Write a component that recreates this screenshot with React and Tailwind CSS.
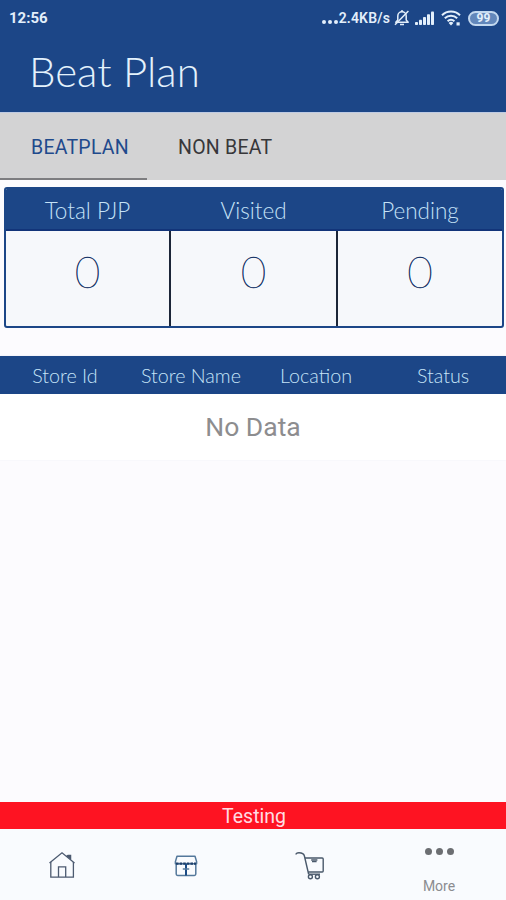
import React, { useState } from "react";

const TABS = [
  { id: "beat", label: "BEATPLAN", className: "w-[147px] pl-[31px]" },
  { id: "non", label: "NON BEAT", className: "w-[155px] pl-[31px]" },
];

const SUMMARY = [
  { label: "Total PJP", value: 0 },
  { label: "Visited", value: 0 },
  { label: "Pending", value: 0 },
];

const COLUMNS = ["Store Id", "Store Name", "Location", "Status"];

// -----------------------------------------
// STATUS BAR ICONS
// -----------------------------------------
function MutedBell() {
  return (
    <svg width="16" height="18" viewBox="0 0 16 18" fill="none" stroke="currentColor" strokeWidth="1.5">
      <path d="M1.8 13.2h12.4l-2-2.2V7a4.2 4.2 0 0 0-8.4 0v4z" strokeLinejoin="round" />
      <path d="M6 15.6h4M8 1v2" />
      <path d="M1 15.8 14.4 2" />
    </svg>
  );
}

function Signal() {
  return (
    <svg width="20" height="14" viewBox="0 0 20 14" fill="currentColor">
      <rect x="0" y="11" width="3" height="3" rx="0.8" />
      <rect x="4" y="8.8" width="3" height="5.2" rx="0.8" />
      <rect x="8" y="6" width="3" height="8" rx="0.8" />
      <rect x="12" y="3.3" width="3" height="10.7" rx="0.8" />
      <rect x="16" y="0.5" width="3" height="13.5" rx="0.8" />
    </svg>
  );
}

function Wifi() {
  return (
    <svg width="21" height="16" viewBox="0 0 21 16" fill="none" stroke="currentColor" strokeWidth="2">
      <path d="M1 5.2a13 13 0 0 1 18 0" />
      <path d="M3.8 8.3a9 9 0 0 1 12.4 0" />
      <path d="M6.6 11.2a5 5 0 0 1 6.8 0" />
      <path d="M10 15.4 7.6 12.9a3.4 3.4 0 0 1 4.8 0z" fill="currentColor" stroke="none" />
      <path d="M15.5 12.3h3.2v3.2h-3.2z" fill="currentColor" stroke="none" />
    </svg>
  );
}

// -----------------------------------------
// BOTTOM NAV ICONS
// -----------------------------------------
function HomeIcon() {
  return (
    <svg width="28" height="28" viewBox="0 0 28 28" fill="none" stroke="#4c5a70" strokeWidth="1.3">
      <path d="M1.5 12 14 1.8 26.5 12" />
      <path d="M2.8 11v15.2h22.6V11" />
      <path d="M10.5 26V15.8h7.2V26" />
      <path d="M18.6 5.4 20 4.4h2.6v4.2" fill="#4c5a70" />
    </svg>
  );
}

function StoreIcon() {
  return (
    <svg width="24" height="22" viewBox="0 0 24 22" fill="none" stroke="#54789b" strokeWidth="1.5">
      <path d="M3 1.2h18l1.6 5.4v2.2H1.4V6.6z" strokeLinejoin="round" />
      <path d="M2.2 8.8V19a1.4 1.4 0 0 0 1.4 1.4h16.8a1.4 1.4 0 0 0 1.4-1.4V8.8" />
      <path d="M2 8.6h20" stroke="#1d3f6b" strokeWidth="2.2" strokeDasharray="2.6 1" />
      <path d="M12 9v11.5" stroke="#1b4b85" strokeWidth="2" />
      <path d="M8.8 14h6.4" strokeWidth="1.5" />
    </svg>
  );
}

function CartIcon() {
  return (
    <svg width="30" height="30" viewBox="0 0 30 30" fill="none" stroke="#4a596b" strokeWidth="1.4">
      <path d="M1 3.6c0-1.3 1.4-1.8 3-1.8 2.8 0 4.8.8 5.4 3.2l4.2 18" />
      <path d="M10 7h17.2a1 1 0 0 1 1 1v12a1 1 0 0 1-1 1H13.2" />
      <path d="M16.2 9h6.2M17 10.6h4.6" />
      <path d="M13.4 23.2h11.6" />
      <circle cx="15.4" cy="25.8" r="2" />
      <circle cx="22.4" cy="25.8" r="2" />
    </svg>
  );
}

function StatusBar() {
  return (
    <div className="flex h-9 items-center pl-[9px] pr-[7px] text-[#e3effb] font-['Roboto',sans-serif]">
      <span className="text-[15px] font-bold">12:56</span>
      <div className="ml-auto flex items-center">
        <div className="mr-[1px] mt-[7px] flex gap-[2px]">
          <i className="size-[4px] rounded-full bg-current" />
          <i className="size-[4px] rounded-full bg-current" />
          <i className="size-[4px] rounded-full bg-current" />
        </div>
        <span className="mr-[4px] text-[14px] font-semibold tracking-[0.15px]">2.4KB/s</span>
        <MutedBell />
        <div className="ml-[5px] flex"><Signal /></div>
        <div className="ml-[6px] flex"><Wifi /></div>
        <span className="ml-[6px] flex h-[15px] w-[31px] items-center justify-center rounded-full border-2 border-[#c3d8ef] bg-[#6287bb] text-[12px] font-bold leading-none">
          99
        </span>
      </div>
    </div>
  );
}

export default function App() {
  const [activeTab, setActiveTab] = useState("beat");

  return (
    <div className="flex h-[900px] w-[506px] flex-col overflow-hidden bg-[#fcfbfe] font-['Lato',sans-serif]">
      {/* HEADER */}
      <header className="h-[112px] shrink-0 bg-[#1c4687]">
        <StatusBar />
        <h1 className="pl-[29px] pt-[10px] text-[42px] font-light leading-[50px] text-[#e4f2fc]">Beat Plan</h1>
      </header>

      {/* TABS */}
      <div className="flex h-[68px] shrink-0 border-t border-[#bfcbe3] bg-[#d3d3d4] font-['Roboto',sans-serif]">
        {TABS.map((tab) => (
          <button
            key={tab.id}
            onClick={() => setActiveTab(tab.id)}
            className={`${tab.className} border-b-2 pt-[4px] text-left text-[19.5px] font-[450] tracking-[0.25px] ${
              activeTab === tab.id ? "border-[#7d7d80] text-[#1f4a8c]" : "border-transparent text-[#37373a]"
            }`}
          >
            {tab.label}
          </button>
        ))}
      </div>

      {/* SUMMARY */}
      <div className="ml-[4px] mr-[2px] mt-[7px] h-[141px] shrink-0 overflow-hidden rounded-[3px] border-2 border-[#1c4687] bg-[#f6f8fb]">
        <div className="grid h-[42px] grid-cols-[163px_169px_1fr] border-b-2 border-[#123479] bg-[#1c4687]">
          {SUMMARY.map((s) => (
            <div key={s.label} className="pt-[2px] text-center text-[22.5px] font-light leading-[40px] text-[#c5e2f7]">
              {s.label}
            </div>
          ))}
        </div>
        <div className="grid h-[95px] grid-cols-[165px_167px_1fr] divide-x-2 divide-[#1c2638]">
          {SUMMARY.map((s) => (
            <div
              key={s.label}
              className="pt-[13px] text-center text-[44px] font-thin leading-[54px] text-[#163468] [-webkit-text-stroke:0.5px_#163468]"
            >
              {s.value}
            </div>
          ))}
        </div>
      </div>

      {/* STORE TABLE */}
      <div className="mt-[28px] grid h-[38px] shrink-0 grid-cols-[129px_123px_127px_1fr] bg-[#1c4687] shadow-[0_1px_2px_rgba(28,70,135,0.5)]">
        {COLUMNS.map((c) => (
          <div key={c} className="pl-[1px] text-center text-[19.7px] font-light leading-[39px] text-[#c5e4f8]">
            {c}
          </div>
        ))}
      </div>
      <div className="relative h-[66px] shrink-0 bg-white text-center text-[26.5px] leading-[65px] text-[#8d8d8f] shadow-[0_-1px_2px_rgba(28,70,135,0.25)] font-['Roboto',sans-serif]">
        No Data
      </div>

      <div className="flex-1" />

      {/* FOOTER */}
      <div className="h-[27px] shrink-0 bg-[#fe1322] pl-[2px] text-center text-[19.5px] leading-[29px] text-[#ffdce2] font-['Roboto',sans-serif]">
        Testing
      </div>
      <nav className="grid h-[71px] shrink-0 grid-cols-[124px_124px_124px_1fr] bg-[#f9fbfe]">
        <button className="flex justify-center pt-[22px]"><HomeIcon /></button>
        <button className="flex justify-center pt-[26px]"><StoreIcon /></button>
        <button className="flex justify-center pt-[22px]"><CartIcon /></button>
        <button className="flex flex-col items-center pt-[19px] font-['Roboto',sans-serif]">
          <span className="flex gap-[4px]">
            <i className="size-[7px] rounded-full bg-[#6c6e72]" />
            <i className="size-[7px] rounded-full bg-[#6c6e72]" />
            <i className="size-[7px] rounded-full bg-[#6c6e72]" />
          </span>
          <span className="mt-[22px] text-[14px] leading-[18px] text-[#8b8c90]">More</span>
        </button>
      </nav>
    </div>
  );
}
